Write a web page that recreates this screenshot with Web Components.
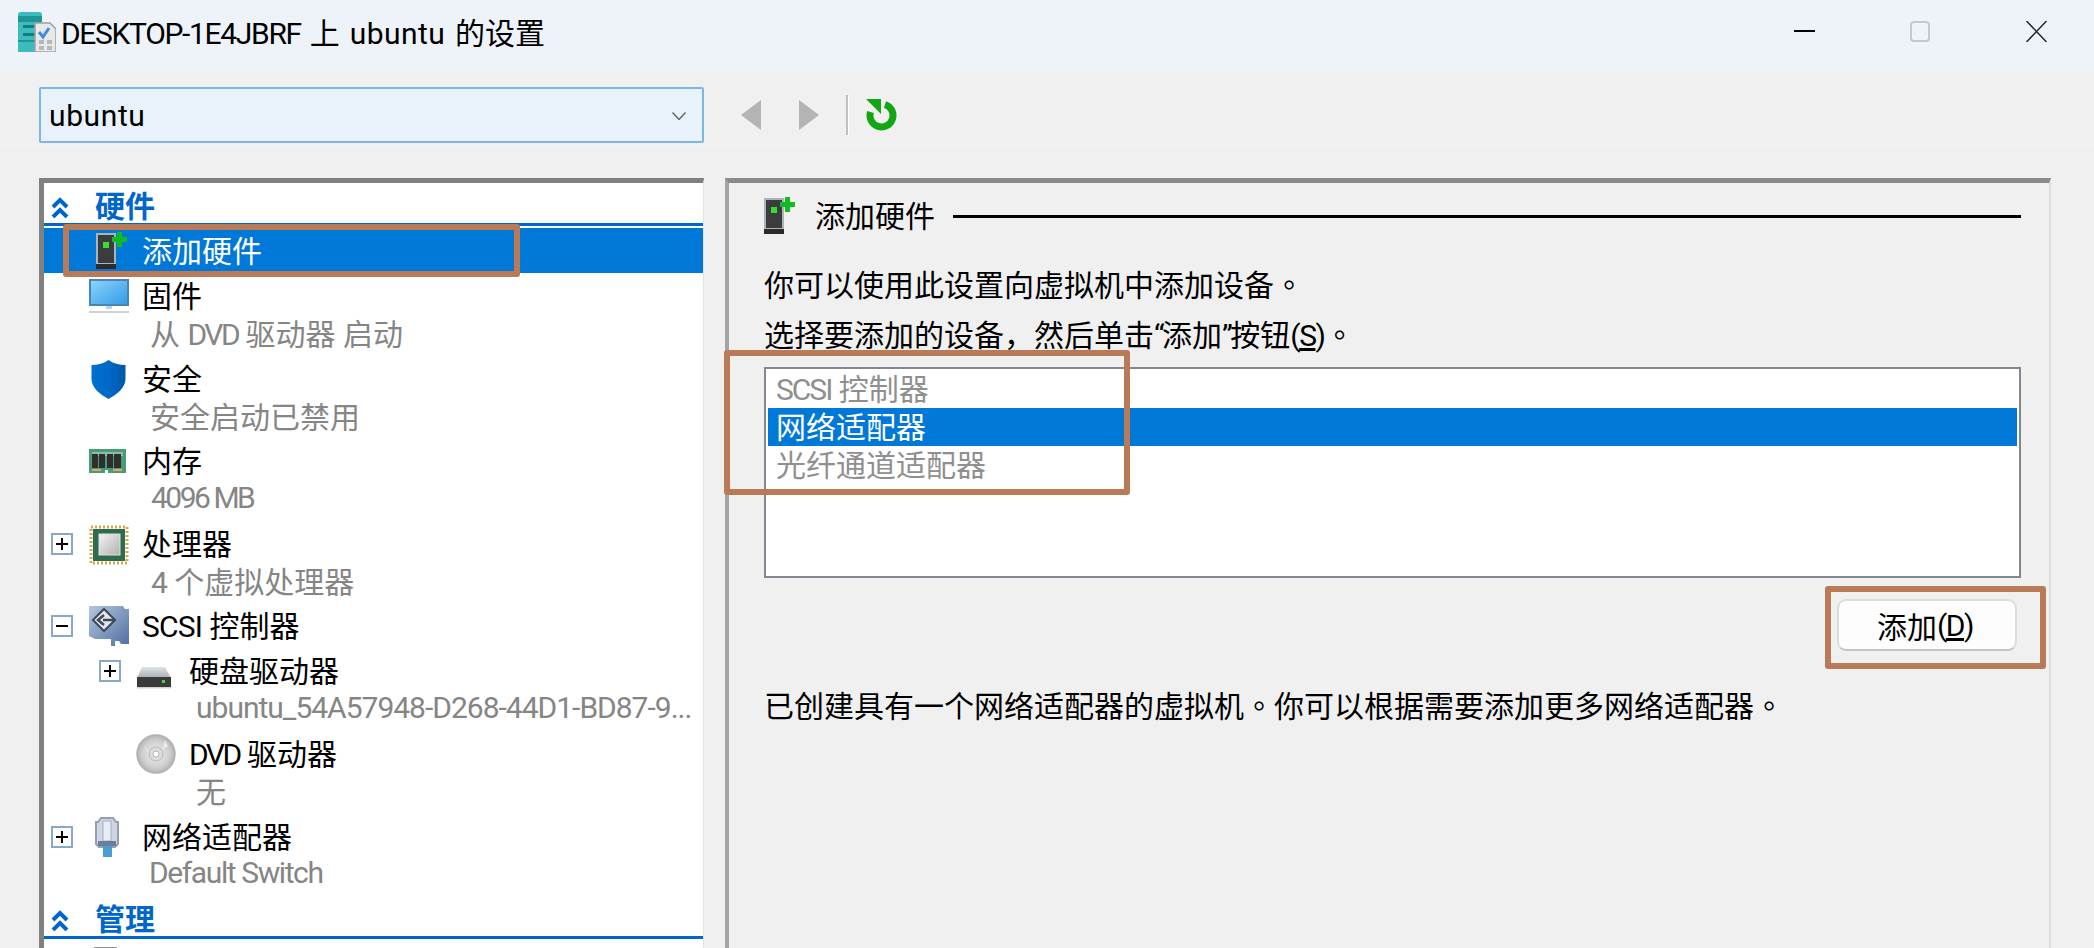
<!DOCTYPE html>
<html lang="zh-CN">
<head>
<meta charset="utf-8">
<title>DESKTOP-1E4JBRF 上 ubuntu 的设置</title>
<style>
    html, body {
        margin: 0;
        height: 948px;
        overflow: hidden;
        background: #f0f0f0;
        font-family: Roboto, "Noto Sans CJK SC", sans-serif;
        font-size: 30px;
    }
    /* punctuation sits centered in the cell in the original font */
    .dot { font-family: "Noto Sans CJK TC", sans-serif; }
    .t2 { letter-spacing: -2.5px; }
    .t1 { letter-spacing: -0.8px; }
    .nar { letter-spacing: -1.5px; }
</style>
</head>
<body>
<settings-window>
    <title-bar><span style="letter-spacing:-1.33px">DESKTOP-1E4JBRF</span><span style="margin:0 10px 0 9px">上</span><span style="letter-spacing:0.4px;margin-right:10px">ubuntu</span>的设置</title-bar>
    <tool-bar>ubuntu</tool-bar>
    <main-panes>
        <tree-pane slot="tree">
            <section-head>硬件</section-head>
            <tree-item icon="add" selected>添加硬件</tree-item>
            <tree-item icon="monitor">固件<span slot="sub">从 <span class="t2">DVD</span> 驱动器 启动</span></tree-item>
            <tree-item icon="shield">安全<span slot="sub">安全启动已禁用</span></tree-item>
            <tree-item icon="memory">内存<span slot="sub" class="t2" style="margin-left:1px">4096 MB</span></tree-item>
            <tree-item icon="cpu" expander="plus">处理器<span slot="sub"><span style="margin-left:1px;letter-spacing:-0.5px">4 </span>个虚拟处理器</span></tree-item>
            <tree-item icon="scsi" expander="minus"><span class="t1">SCSI</span> 控制器</tree-item>
            <tree-item icon="hdd" expander="plus" level="2">硬盘驱动器<span slot="sub" style="letter-spacing:-1px">ubuntu_54A57948-D268-44D1-BD87-9...</span></tree-item>
            <tree-item icon="dvd" level="2"><span class="t2">DVD</span> 驱动器<span slot="sub">无</span></tree-item>
            <tree-item icon="nic" expander="plus">网络适配器<span slot="sub" style="letter-spacing:-1.4px;margin-left:-1px">Default Switch</span></tree-item>
            <section-head>管理</section-head>
            <tree-item icon="page"></tree-item>
        </tree-pane>
        <detail-pane slot="detail">
            <pane-heading>添加硬件</pane-heading>
            <p>你可以使用此设置向虚拟机中添加设备<span class="dot" lang="zh-TW">。</span></p>
            <p>选择要添加的设备&#xFF0C;然后单击<span class="t2">“</span>添加<span class="t2">”</span>按钮<span class="nar">(<u>S</u>)</span><span class="dot" lang="zh-TW">。</span></p>
            <device-list>
                <device-row disabled><span style="letter-spacing:-2px">SCSI</span> 控制器</device-row>
                <device-row selected>网络适配器</device-row>
                <device-row disabled>光纤通道适配器</device-row>
            </device-list>
            <add-button>添加<span class="nar">(<u>D</u>)</span></add-button>
            <p class="last">已创建具有一个网络适配器的虚拟机<span class="dot" lang="zh-TW">。</span>你可以根据需要添加更多网络适配器<span class="dot" lang="zh-TW">。</span></p>
        </detail-pane>
    </main-panes>
    <note-box style="left:63px;top:224px;width:457px;height:53px"></note-box>
    <note-box style="left:724px;top:350px;width:406px;height:145px"></note-box>
    <note-box style="left:1825px;top:586px;width:221px;height:83px"></note-box>
</settings-window>

<script>
const ICONS = {
    add: `<rect x="8" y="3" width="18" height="30" fill="#3c3c3c" stroke="#a9b4bf" stroke-width="2"/>
        <rect x="7" y="33" width="20" height="5" fill="#2b2b2b"/>
        <rect x="14" y="11" width="6" height="6" fill="#33dd33"/>
        <path d="M28 1h5v5h5v5h-5v5h-5v-5h-5V6h5z" fill="#11bb22"/>`,
    monitor: `<defs><linearGradient id="m" x1="0" y1="0" x2="1" y2="1"><stop offset="0" stop-color="#8fd4ff"/><stop offset="1" stop-color="#2f9be6"/></linearGradient></defs>
        <rect x="1" y="4" width="38" height="25" fill="url(#m)" stroke="#4a86b4" stroke-width="2"/>
        <rect x="17" y="30" width="6" height="3" fill="#b8d4e8"/>
        <rect x="0" y="35" width="40" height="2" fill="#ccd4da"/>`,
    shield: `<defs><linearGradient id="s" x1="0" y1="0" x2="1" y2="0"><stop offset="0" stop-color="#0070d0"/><stop offset="0.5" stop-color="#0068c8"/><stop offset="1" stop-color="#0058a8"/></linearGradient></defs>
        <path d="M19.5 1C15 4.5 9 6 2.5 6V20C2.5 29 12 36 19.5 40C27 36 36.5 29 36.5 20V6C30 6 24 4.5 19.5 1Z" fill="url(#s)"/>`,
    memory: `<rect x="0" y="8" width="37" height="24" fill="#4a9c78"/>
        <rect x="3" y="11" width="31" height="4" fill="#8cc0a4"/>
        <rect x="3" y="13" width="6" height="14" fill="#2f2f2f"/><rect x="10" y="13" width="6" height="14" fill="#2f2f2f"/>
        <rect x="18" y="13" width="6" height="14" fill="#2f2f2f"/><rect x="25" y="13" width="7" height="14" fill="#2f2f2f"/>
        <rect x="3" y="28" width="9" height="2" fill="#e0a860"/><rect x="24" y="28" width="9" height="2" fill="#e0a860"/>
        <rect x="16" y="29" width="3" height="3" fill="#fff"/>`,
    cpu: `<rect x="2" y="3" width="36" height="36" fill="none" stroke="#d8a848" stroke-width="3" stroke-dasharray="2 2"/>
        <rect x="4" y="5" width="32" height="32" fill="#2f6b4f"/>
        <defs><linearGradient id="c" x1="0" y1="0" x2="1" y2="1"><stop offset="0" stop-color="#f4f4f4"/><stop offset="1" stop-color="#b0b0b0"/></linearGradient></defs>
        <rect x="10" y="10" width="21" height="21" fill="url(#c)" stroke="#d8e4dc"/>`,
    scsi: `<defs><linearGradient id="k" x1="0" y1="0" x2="1" y2="1"><stop offset="0" stop-color="#b4c6e0"/><stop offset="1" stop-color="#4f6f9f"/></linearGradient></defs>
        <path d="M0 0H34L36 3H40V38H32L30 35H26V40H22V33H6L0 30Z" fill="url(#k)"/>
        <path d="M15 3L26 14 15 25 4 14Z" fill="#e4e8ee" stroke="#3d4858" stroke-width="2"/>
        <path d="M26 14H14M15 9L9 14 15 19" fill="none" stroke="#3d4858" stroke-width="2.5"/>`,
    hdd: `<defs><linearGradient id="h" x1="0" y1="0" x2="0" y2="1"><stop offset="0" stop-color="#dfe3e6"/><stop offset="1" stop-color="#a9aeb2"/></linearGradient></defs>
        <path d="M6 16H29L35 27H1Z" fill="url(#h)"/>
        <rect x="1" y="26" width="34" height="10" fill="#3a3a3a"/>
        <rect x="1" y="36" width="34" height="1.5" fill="#cfd3d6"/>
        <rect x="26" y="29" width="3" height="3" fill="#33dd33"/>`,
    dvd: `<defs><radialGradient id="d" cx="0.5" cy="0.5" r="0.5"><stop offset="0.25" stop-color="#e4e4e4"/><stop offset="0.7" stop-color="#d0d0d0"/><stop offset="1" stop-color="#b4b4b4"/></radialGradient></defs>
        <circle cx="20" cy="20" r="19" fill="url(#d)" stroke="#b0b0b0" stroke-width="1.5"/>
        <path d="M8 12L14 17 12 22Z" fill="#e6dcec"/><path d="M32 12L26 16 29 6Z" fill="#e0efe6"/>
        <circle cx="20" cy="20" r="7" fill="#dcdcdc" stroke="#b8b8b8"/>
        <circle cx="20" cy="20" r="3" fill="#fff" stroke="#b8b8b8"/>`,
    nic: `<path d="M9 5L12 1H24L27 5H29V27L26 30H10L7 27V5Z" fill="#cfd6e2" stroke="#93a0b4" stroke-width="2"/>
        <rect x="14" y="4" width="8" height="20" fill="#e8ecf4" stroke="#a4afc0"/>
        <rect x="9" y="24" width="18" height="5" fill="#6c7f9a"/>
        <rect x="14" y="29" width="9" height="11" fill="#4a9fd0"/>`,
    page: `<path d="M6 6H27L34 13V40H6Z" fill="#fff" stroke="#909090" stroke-width="2"/>`
};

class SvgIcon extends HTMLElement {
    constructor(){
        super();
        this.shadowDOM = this.attachShadow({mode:"open"});
    }

    connectedCallback() {
        this.shadowDOM.innerHTML = `
        <style>
            :host { display: block; width: 40px; height: 40px; flex: none; }
            svg { display: block; overflow: visible; }
        </style>
        <svg width="40" height="40" viewBox="0 0 40 40">${ICONS[this.getAttribute("name")]}</svg>
        `;
    }
}

class SettingsWindow extends HTMLElement {
    constructor(){
        super();
        this.shadowDOM = this.attachShadow({mode:"open"});
    }

    connectedCallback() {
        this.shadowDOM.innerHTML = `
        <style>
            :host {
                display: block;
                position: relative;
                height: 948px;
                overflow: hidden;
                background: #f0f0f0;
            }
        </style>
        <slot></slot>
        `;
    }
}

class TitleBar extends HTMLElement {
    constructor(){
        super();
        this.shadowDOM = this.attachShadow({mode:"open"});
    }

    connectedCallback() {
        this.shadowDOM.innerHTML = `
        <style>
            :host {
                display: flex;
                align-items: center;
                height: 71px;
                padding: 0 47px 9px 18px;
                box-sizing: border-box;
                background: #eef3fa;
                color: #000;
                white-space: nowrap;
            }
            .logo { margin: 2px 5px 0 0; flex: none; }
            .text { flex: 1; }
            .controls { display: flex; align-items: center; flex: none; }
            .controls svg { display: block; }
        </style>
        <svg class="logo" width="38" height="40" viewBox="0 0 38 40">
            <path d="M0 3Q0 0 3 0H21Q24 0 24 3V40H0Z" fill="#3cbcbc"/>
            <rect x="0" y="4" width="24" height="6" fill="#1e9696"/>
            <rect x="5" y="13" width="14" height="3" fill="#0f7f80"/>
            <rect x="5" y="21" width="14" height="3" fill="#0f7f80"/>
            <rect x="0" y="28" width="24" height="2" fill="#1e9696"/>
            <path d="M17 11H32L38 17V40H17Z" fill="#e8e8e8" stroke="#a0a0a0" stroke-width="1.5"/>
            <path d="M21 20L25 25 31 16" fill="none" stroke="#3b8ee0" stroke-width="3"/>
            <rect x="21" y="28" width="5" height="4" fill="#b8b8b8"/><rect x="29" y="28" width="5" height="4" fill="#b8b8b8"/>
            <rect x="21" y="34" width="5" height="4" fill="#b8b8b8"/><rect x="29" y="34" width="5" height="4" fill="#b8b8b8"/>
        </svg>
        <span class="text"><slot></slot></span>
        <span class="controls">
            <svg width="21" height="4" viewBox="0 0 21 4"><rect y="1" width="21" height="2" fill="#000"/></svg>
            <svg style="margin-left:95px" width="20" height="21" viewBox="0 0 20 21"><rect x="1" y="1" width="18" height="19" rx="3" fill="none" stroke="#c4c9cf" stroke-width="2"/></svg>
            <svg style="margin-left:96px" width="21" height="21" viewBox="0 0 21 21"><path d="M0.5 0L20.5 21M20.5 0L0.5 21" stroke="#222" stroke-width="1.5" fill="none"/></svg>
        </span>
        `;
    }
}

class ToolBar extends HTMLElement {
    constructor(){
        super();
        this.shadowDOM = this.attachShadow({mode:"open"});
    }

    connectedCallback() {
        this.shadowDOM.innerHTML = `
        <style>
            :host {
                display: flex;
                align-items: center;
                height: 75px;
                padding: 16px 0 3px 39px;
                box-sizing: border-box;
                border-bottom: 1px solid #f5f5f5;
            }
            .combo {
                display: flex;
                align-items: center;
                justify-content: space-between;
                width: 665px;
                height: 56px;
                padding: 2px 16px 0 8px;
                box-sizing: border-box;
                background: #e8f2fb;
                border: 2px solid #7db5ea;
                border-radius: 2px;
                color: #000;
                letter-spacing: 0.6px;
            }
            svg { display: block; flex: none; }
            .sep {
                width: 2px;
                height: 40px;
                margin: 0 17px 0 27px;
                background: #c0c0c0;
                box-shadow: 1px 0 #fff;
                flex: none;
            }
        </style>
        <div class="combo">
            <span><slot></slot></span>
            <svg width="14" height="8" viewBox="0 0 14 8"><path d="M0.5 0.5L7 7.5 13.5 0.5" fill="none" stroke="#666" stroke-width="1.5"/></svg>
        </div>
        <svg style="margin-left:37px" width="20" height="30" viewBox="0 0 20 30"><path d="M20 0V30L0 15Z" fill="#b4b4b4"/></svg>
        <svg style="margin-left:38px" width="20" height="30" viewBox="0 0 20 30"><path d="M0 0V30L20 15Z" fill="#b4b4b4"/></svg>
        <div class="sep"></div>
        <svg width="33" height="32" viewBox="0 0 33 32">
            <path d="M20 5.5A11.5 11.5 0 1 1 5.5 13" fill="none" stroke="#14a514" stroke-width="7"/>
            <path d="M1 0H16V15Z" fill="#14a514"/>
        </svg>
        `;
    }
}

class MainPanes extends HTMLElement {
    constructor(){
        super();
        this.shadowDOM = this.attachShadow({mode:"open"});
    }

    connectedCallback() {
        this.shadowDOM.innerHTML = `
        <style>
            :host {
                display: flex;
                gap: 21px;
                height: 770px;
                margin-top: 32px;
                padding-left: 39px;
            }
        </style>
        <slot name="tree"></slot>
        <slot name="detail"></slot>
        `;
    }
}

class TreePane extends HTMLElement {
    constructor(){
        super();
        this.shadowDOM = this.attachShadow({mode:"open"});
    }

    connectedCallback() {
        this.shadowDOM.innerHTML = `
        <style>
            :host {
                display: block;
                width: 665px;
                height: 775px;
                box-sizing: border-box;
                background: #fff;
                border-top: 5px solid #808080;
                border-left: 5px solid #808080;
                border-right: 1px solid #e3e3e3;
                overflow: hidden;
                flex: none;
            }
        </style>
        <slot></slot>
        `;
    }
}

class SectionHead extends HTMLElement {
    constructor(){
        super();
        this.shadowDOM = this.attachShadow({mode:"open"});
    }

    connectedCallback() {
        this.shadowDOM.innerHTML = `
        <style>
            :host {
                display: flex;
                align-items: center;
                gap: 26px;
                height: 43px;
                padding: 8px 0 0 7px;
                box-sizing: border-box;
                border-bottom: 3px solid #0066cc;
                color: #0066cc;
                font-weight: 700;
                line-height: 32px;
            }
            svg { display: block; flex: none; }
        </style>
        <svg width="18" height="22" viewBox="0 0 18 22"><path d="M2 11L9 4 16 11M2 21L9 14 16 21" fill="none" stroke="#0066cc" stroke-width="4"/></svg>
        <span><slot></slot></span>
        `;
    }
}

class TreeItem extends HTMLElement {
    constructor(){
        super();
        this.shadowDOM = this.attachShadow({mode:"open"});
    }

    connectedCallback() {
        const level = this.getAttribute("level") === "2";
        const exp = this.getAttribute("expander");
        const hasSub = this.querySelector("[slot=sub]") !== null;
        const mark = exp === "plus" ? `<path d="M5 11H17M11 5V17" stroke="#000" stroke-width="2"/>`
            : `<path d="M5 11H17" stroke="#000" stroke-width="2"/>`;

        this.shadowDOM.innerHTML = `
        <style>
            :host {
                display: block;
                box-sizing: border-box;
                height: ${hasSub ? 82.6 : 45}px;
                padding-top: ${hasSub ? 4.5 : 4}px;
                color: #000;
                white-space: nowrap;
            }
            :host([selected]) {
                height: 45px;
                margin-top: 2px;
                padding-top: 4px;
                background: #0078d7;
                color: #fff;
            }
            .row {
                display: grid;
                grid-template-columns: ${level ? "92px 53px" : "45px 53px"} 1fr;
                grid-auto-rows: 37px;
                align-items: center;
            }
            .label { padding-bottom: 4px; }
            .exp { margin-left: ${level ? 55 : 7}px; position: relative; }
            .exp svg { display: block; position: absolute; left: 0; top: -11px; }
            .sub {
                grid-column: 3;
                margin-left: ${level ? 7 : 8}px;
                padding-bottom: 2px;
                color: #858585;
            }
        </style>
        <div class="row">
            <div class="exp">${exp ? `<svg width="22" height="22" viewBox="0 0 22 22"><rect x="1" y="1" width="20" height="20" fill="#fff" stroke="#8aa8c8" stroke-width="2"/>${mark}</svg>` : ""}</div>
            <svg-icon name="${this.getAttribute("icon")}"></svg-icon>
            <div class="label"><slot></slot></div>
            ${hasSub ? `<div class="sub"><slot name="sub"></slot></div>` : ""}
        </div>
        `;
    }
}

class DetailPane extends HTMLElement {
    constructor(){
        super();
        this.shadowDOM = this.attachShadow({mode:"open"});
    }

    connectedCallback() {
        this.shadowDOM.innerHTML = `
        <style>
            :host {
                display: block;
                width: 1326px;
                height: 775px;
                box-sizing: border-box;
                padding: 13px 28px 0 35px;
                border-top: 5px solid #8a8a8a;
                border-left: 4px solid #a4a4a4;
                border-right: 2px solid #dedede;
                flex: none;
                color: #000;
            }
            ::slotted(p) {
                margin: 0;
                height: 50px;
                line-height: 51px;
                white-space: nowrap;
            }
            ::slotted(pane-heading) { margin-bottom: 22px; }
            ::slotted(p.last) { margin-top: 30px; line-height: 46px; }
        </style>
        <slot></slot>
        `;
    }
}

class PaneHeading extends HTMLElement {
    constructor(){
        super();
        this.shadowDOM = this.attachShadow({mode:"open"});
    }

    connectedCallback() {
        this.shadowDOM.innerHTML = `
        <style>
            :host {
                display: flex;
                align-items: center;
                height: 40px;
                white-space: nowrap;
            }
            svg-icon { margin-left: -7px; }
            span { margin-left: 18px; padding-bottom: 4px; }
            .line { flex: 1; height: 3px; margin-left: 18px; background: #000; }
        </style>
        <svg-icon name="add"></svg-icon>
        <span><slot></slot></span>
        <div class="line"></div>
        `;
    }
}

class DeviceList extends HTMLElement {
    constructor(){
        super();
        this.shadowDOM = this.attachShadow({mode:"open"});
    }

    connectedCallback() {
        this.shadowDOM.innerHTML = `
        <style>
            :host {
                display: block;
                height: 211px;
                margin-top: 9px;
                padding: 1px 2px;
                box-sizing: border-box;
                background: #fff;
                border: 2px solid #828790;
            }
        </style>
        <slot></slot>
        `;
    }
}

class DeviceRow extends HTMLElement {
    constructor(){
        super();
        this.shadowDOM = this.attachShadow({mode:"open"});
    }

    connectedCallback() {
        this.shadowDOM.innerHTML = `
        <style>
            :host {
                display: block;
                height: 38px;
                line-height: 40px;
                padding-left: 8px;
                white-space: nowrap;
            }
            :host([disabled]) { color: #8f8f8f; }
            :host([selected]) { background: #0078d7; color: #fff; }
        </style>
        <slot></slot>
        `;
    }
}

class AddButton extends HTMLElement {
    constructor(){
        super();
        this.shadowDOM = this.attachShadow({mode:"open"});
    }

    connectedCallback() {
        this.shadowDOM.innerHTML = `
        <style>
            :host {
                display: flex;
                align-items: center;
                justify-content: center;
                width: 180px;
                height: 52px;
                margin: 21px 4px 0 auto;
                padding-right: 4px;
                box-sizing: border-box;
                background: #fdfdfd;
                border: 2px solid #dcdcdc;
                border-bottom-color: #c4c4c4;
                border-radius: 9px;
                color: #000;
            }
        </style>
        <slot></slot>
        `;
    }
}

class NoteBox extends HTMLElement {
    constructor(){
        super();
        this.shadowDOM = this.attachShadow({mode:"open"});
    }

    connectedCallback() {
        this.shadowDOM.innerHTML = `
        <style>
            :host {
                display: block;
                position: absolute;
                box-sizing: border-box;
                border: 6px solid #b97a57;
                border-radius: 3px;
            }
        </style>
        `;
    }
}

customElements.define("svg-icon", SvgIcon);
customElements.define("settings-window", SettingsWindow);
customElements.define("title-bar", TitleBar);
customElements.define("tool-bar", ToolBar);
customElements.define("main-panes", MainPanes);
customElements.define("tree-pane", TreePane);
customElements.define("section-head", SectionHead);
customElements.define("tree-item", TreeItem);
customElements.define("detail-pane", DetailPane);
customElements.define("pane-heading", PaneHeading);
customElements.define("device-list", DeviceList);
customElements.define("device-row", DeviceRow);
customElements.define("add-button", AddButton);
customElements.define("note-box", NoteBox);
</script>
</body>
</html>
